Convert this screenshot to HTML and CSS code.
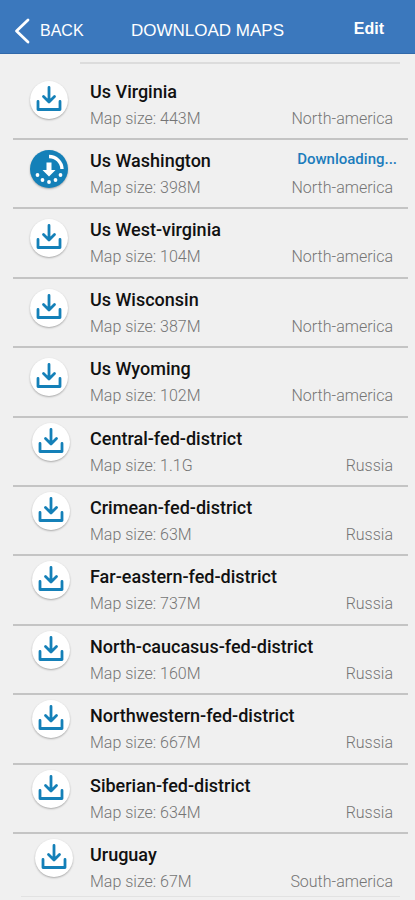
FILE: index.html
```html
<!DOCTYPE html>
<html lang="en">
<head>
    <meta charset="UTF-8">
    <meta name="viewport" content="width=device-width, initial-scale=1.0">
    <title>Download Maps</title>
    <link rel="stylesheet" href="styles.css">
</head>
<body>
    <!-- shared icons -->
    <svg class="sprite" width="0" height="0" aria-hidden="true">
        <symbol id="icon-download" viewBox="0 0 38 38">
            <path d="M19 6.500v14M13.500 15.500l5.500 5.500 5.500-5.500M8 20.500v8h22v-8" fill="none" stroke="#1480b8" stroke-width="2.800" stroke-linejoin="round" stroke-linecap="round"/>
        </symbol>
        <symbol id="icon-progress" viewBox="0 0 38 38">
            <path d="M19 6.500a13 13 0 0 1 13 12.500" fill="none" stroke="#fff" stroke-width="3.400"/>
            <path d="M16.500 12.500h5v7.500h4l-6.500 6.500-6.500-6.500h4z" fill="#fff"/>
            <g fill="#fff">
                <circle cx="7.500" cy="25" r="1.900"/>
                <circle cx="12.500" cy="30" r="1.900"/>
                <circle cx="19" cy="32" r="1.900"/>
                <circle cx="25.500" cy="30" r="1.900"/>
                <circle cx="30.500" cy="25" r="1.900"/>
            </g>
        </symbol>
    </svg>

    <header class="topbar">
        <a href="#" class="back">
            <svg width="16" height="26" viewBox="0 0 16 26" aria-hidden="true"><path d="M14 2L2.500 13 14 24" fill="none" stroke="#fff" stroke-width="2.800" stroke-linecap="round" stroke-linejoin="round"/></svg>
            <span>BACK</span>
        </a>
        <h1>DOWNLOAD MAPS</h1>
        <button type="button" class="edit">Edit</button>
    </header>

    <main class="maps">
        <ul class="map-list">
            <li class="map first">
                <button type="button" class="action" aria-label="Download Us Virginia"><svg><use href="#icon-download"/></svg></button>
                <div class="info">
                    <h2>Us Virginia</h2>
                    <p class="meta"><span>Map size: 443M</span><span>North-america</span></p>
                </div>
            </li>
            <li class="map">
                <button type="button" class="action active" aria-label="Downloading Us Washington"><svg><use href="#icon-progress"/></svg></button>
                <div class="info">
                    <div class="name-row">
                        <h2>Us Washington</h2>
                        <span class="status">Downloading...</span>
                    </div>
                    <p class="meta"><span>Map size: 398M</span><span>North-america</span></p>
                </div>
            </li>
            <li class="map">
                <button type="button" class="action" aria-label="Download Us West-virginia"><svg><use href="#icon-download"/></svg></button>
                <div class="info">
                    <h2>Us West-virginia</h2>
                    <p class="meta"><span>Map size: 104M</span><span>North-america</span></p>
                </div>
            </li>
            <li class="map">
                <button type="button" class="action" aria-label="Download Us Wisconsin"><svg><use href="#icon-download"/></svg></button>
                <div class="info">
                    <h2>Us Wisconsin</h2>
                    <p class="meta"><span>Map size: 387M</span><span>North-america</span></p>
                </div>
            </li>
            <li class="map">
                <button type="button" class="action" aria-label="Download Us Wyoming"><svg><use href="#icon-download"/></svg></button>
                <div class="info">
                    <h2>Us Wyoming</h2>
                    <p class="meta"><span>Map size: 102M</span><span>North-america</span></p>
                </div>
            </li>
            <li class="map russia">
                <button type="button" class="action" aria-label="Download Central-fed-district"><svg><use href="#icon-download"/></svg></button>
                <div class="info">
                    <h2>Central-fed-district</h2>
                    <p class="meta"><span>Map size: 1.1G</span><span>Russia</span></p>
                </div>
            </li>
            <li class="map russia">
                <button type="button" class="action" aria-label="Download Crimean-fed-district"><svg><use href="#icon-download"/></svg></button>
                <div class="info">
                    <h2>Crimean-fed-district</h2>
                    <p class="meta"><span>Map size: 63M</span><span>Russia</span></p>
                </div>
            </li>
            <li class="map russia">
                <button type="button" class="action" aria-label="Download Far-eastern-fed-district"><svg><use href="#icon-download"/></svg></button>
                <div class="info">
                    <h2>Far-eastern-fed-district</h2>
                    <p class="meta"><span>Map size: 737M</span><span>Russia</span></p>
                </div>
            </li>
            <li class="map russia">
                <button type="button" class="action" aria-label="Download North-caucasus-fed-district"><svg><use href="#icon-download"/></svg></button>
                <div class="info">
                    <h2>North-caucasus-fed-district</h2>
                    <p class="meta"><span>Map size: 160M</span><span>Russia</span></p>
                </div>
            </li>
            <li class="map russia">
                <button type="button" class="action" aria-label="Download Northwestern-fed-district"><svg><use href="#icon-download"/></svg></button>
                <div class="info">
                    <h2>Northwestern-fed-district</h2>
                    <p class="meta"><span>Map size: 667M</span><span>Russia</span></p>
                </div>
            </li>
            <li class="map russia">
                <button type="button" class="action" aria-label="Download Siberian-fed-district"><svg><use href="#icon-download"/></svg></button>
                <div class="info">
                    <h2>Siberian-fed-district</h2>
                    <p class="meta"><span>Map size: 634M</span><span>Russia</span></p>
                </div>
            </li>
            <li class="map last">
                <button type="button" class="action" aria-label="Download Uruguay"><svg><use href="#icon-download"/></svg></button>
                <div class="info">
                    <h2>Uruguay</h2>
                    <p class="meta"><span>Map size: 67M</span><span>South-america</span></p>
                </div>
            </li>
        </ul>
    </main>
</body>
</html>
```
FILE: styles.css
```css
* {
    box-sizing: border-box;
}
body {
    margin: 0;
    min-height: 100vh;
    display: flex;
    flex-direction: column;
    background: #f0f0f0;
    font-family: Roboto, sans-serif;
}
h1, h2, p, ul {
    margin: 0;
    padding: 0;
}
.sprite {
    position: absolute;
}

/* Top bar */
.topbar {
    display: grid;
    grid-template-columns: 1fr auto 1fr;
    align-items: center;
    height: 54px;
    padding-top: 8px;
    background: #3b78bd;
    border-bottom: 1px solid #3169aa;
    color: white;
    font-family: "Liberation Sans", Arial, sans-serif;
}
.back {
    display: flex;
    align-items: center;
    gap: 10px;
    padding-left: 14px;
    color: white;
    font-size: 16px;
    text-decoration: none;
}
.topbar h1 {
    font-size: 17px;
    font-weight: normal;
}
.edit {
    justify-self: end;
    padding: 0 31px 4px 0;
    border: none;
    background: none;
    color: white;
    font-family: inherit;
    font-size: 16px;
    font-weight: bold;
    cursor: pointer;
}

/* Map list */
.maps {
    flex: 1;
    display: flex;
    flex-direction: column;
    padding: 8px 7px 3px 13px;
}
.map-list {
    flex: 1;
    display: flex;
    flex-direction: column;
    list-style: none;
}
.map-list::before {
    content: "";
    height: 2px;
    margin: 0 8px 0 67px;
    background: #dcdcdc;
}
.map-list::after {
    content: "";
    height: 1px;
    margin: 0 8px;
    background: #e2e2e2;
}
.map {
    flex: 1 0 auto;
    display: flex;
    align-items: flex-start;
    padding: 10px 15px 0 17px;
    border-bottom: 2px solid #c4c4c4;
}
.map.first {
    flex: none;
    padding-top: 17px;
    padding-bottom: 9px;
}
.map.russia {
    padding-left: 19px;
}
.map.last {
    flex: none;
    padding-left: 22px;
    padding-bottom: 4px;
    border-bottom: none;
}
.action {
    flex: none;
    width: 38px;
    height: 38px;
    padding: 0;
    border: none;
    border-radius: 50%;
    background: white;
    box-shadow: 0 1px 2px rgba(0,0,0,0.3);
    cursor: pointer;
}
.action svg {
    display: block;
    width: 38px;
    height: 38px;
}
.action.active {
    background: #1480b8;
}
.russia .action,
.last .action {
    margin-top: -5px;
}
.info {
    flex: 1;
    margin-left: 22px;
}
.russia .info {
    margin-left: 20px;
}
.last .info {
    margin-left: 17px;
}
.name-row {
    display: flex;
    justify-content: space-between;
}
.info h2 {
    color: #111;
    font-size: 18px;
    font-weight: 500;
    line-height: 22px;
}
.status {
    margin-right: -4px;
    color: #1c7cbc;
    font-size: 15px;
    font-weight: 500;
    line-height: 18px;
}
.meta {
    display: flex;
    justify-content: space-between;
    margin-top: 6px;
    color: #757575;
    font-size: 16px;
    font-weight: 300;
    line-height: 20px;
}
```
